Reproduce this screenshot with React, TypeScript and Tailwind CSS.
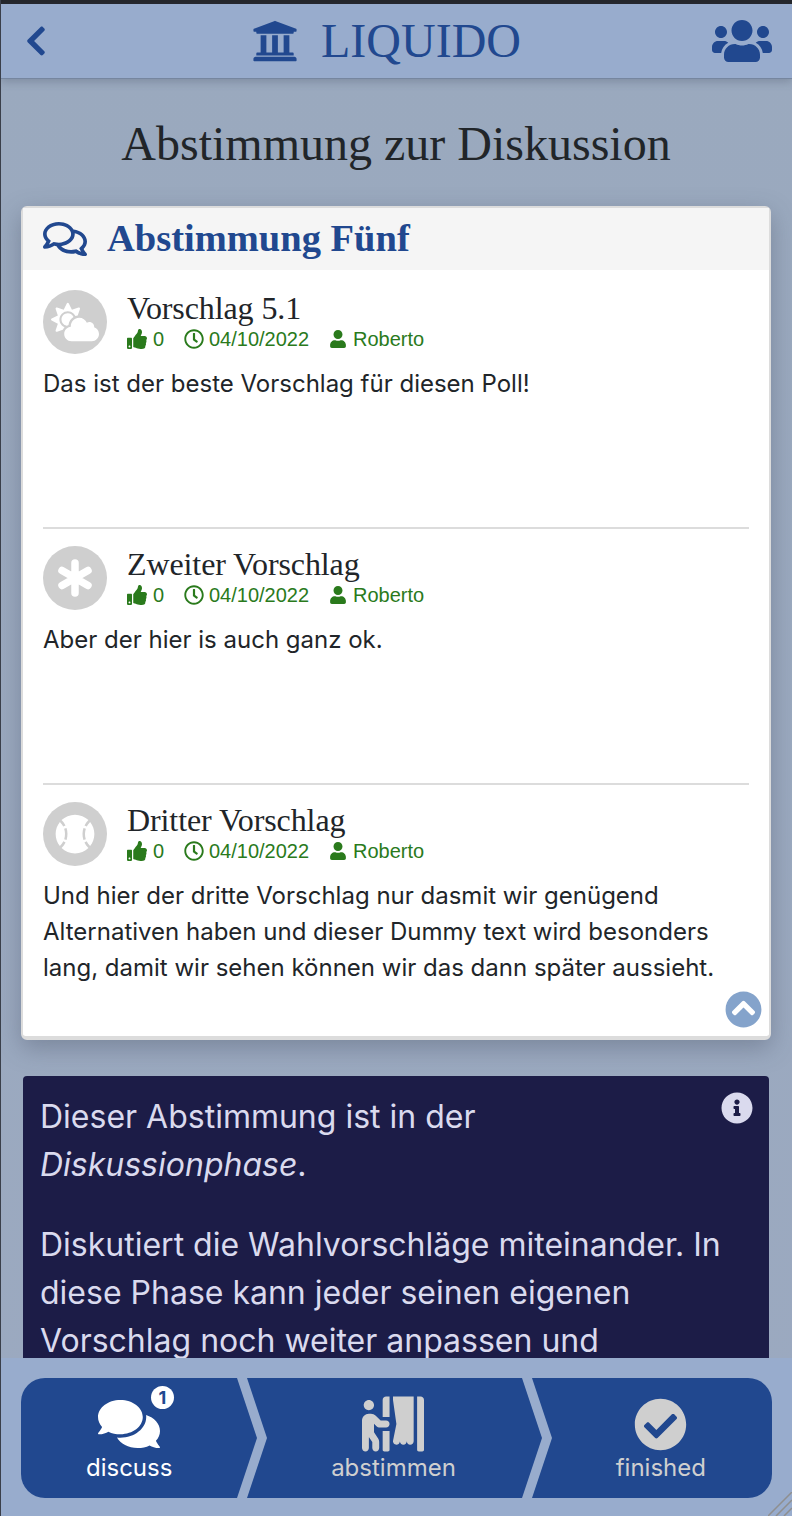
import React from 'react';
import {
  FaBaseballBall,
  FaCheckCircle,
  FaChevronCircleUp,
  FaChevronLeft,
  FaCloudSun,
  FaComments,
  FaInfoCircle,
  FaPersonBooth,
  FaRegClock,
  FaRegComments,
  FaThumbsUp,
  FaUniversity,
  FaUser,
  FaUsers,
} from 'react-icons/fa';

const serif = "font-['Liberation_Serif',serif]";

function Spokes() {
  return (
    <svg width="40" height="40" viewBox="0 0 40 40" stroke="currentColor" strokeWidth="7.5" strokeLinecap="round">
      <path d="M20 5V35M7 12.5L33 27.5M33 12.5L7 27.5" />
    </svg>
  );
}

function Proposal({ icon, title, text, border }: { icon: React.ReactNode; title: string; text: string; border?: boolean }) {
  return (
    <div className={`h-[239px] ${border ? 'border-b-2 border-[#dcdcdc]' : ''}`}>
      <div className="flex">
        <div className="w-16 h-16 rounded-full bg-[#cfcfcf] flex items-center justify-center text-white shrink-0">{icon}</div>
        <div className="ml-5">
          <div className={`${serif} text-[32px] leading-[36px] text-[#212529] tracking-[-0.1px]`}>{title}</div>
          <div className="flex items-center h-[20px] mt-[3px] text-[20px] text-[#2a7a1c] font-['Liberation_Sans',sans-serif]">
            <FaThumbsUp size={20} />
            <span className="ml-[6px] w-[31px]">0</span>
            <FaRegClock size={20} />
            <span className="ml-[5px] w-[120px]">04/10/2022</span>
            <FaUser size={18} />
            <span className="ml-[6px]">Roberto</span>
          </div>
        </div>
      </div>
      <p className="mt-[12px] text-[24px] leading-[36px] text-[#212529]">{text}</p>
    </div>
  );
}

function Step({ icon, label, active, badge }: { icon: React.ReactNode; label: string; active?: boolean; badge?: boolean }) {
  return (
    <div className={`relative flex flex-col items-center ${active ? 'text-white' : 'text-[#cfcfcf]'}`}>
      <div className="h-[54px] flex items-center">{icon}</div>
      {badge && (
        <span className="absolute left-[65px] top-[-11px] w-[23px] h-[23px] rounded-full bg-white text-[#21488f] text-[18px] font-bold leading-[23px] text-center">
          1
        </span>
      )}
      <span className="text-[24px] leading-[30px] mt-[2px]">{label}</span>
    </div>
  );
}

export default function App() {
  return (
    <div className="relative h-[1516px] w-[792px] overflow-hidden flex flex-col bg-gradient-to-b from-[#9aa9be] to-[#9ba9c0] font-['Inter',sans-serif] border-l border-[#3a3f4a]">
      <div className="h-1 shrink-0 bg-[#24262b]" />
      <header className="relative z-10 h-[75px] shrink-0 bg-[#98accd] border-b border-[#76869f] shadow-[0_3px_8px_rgba(70,80,100,0.3)] flex items-center justify-between pr-5 text-[#21488f]">
        <div className="w-[60px] pl-[18px]">
          <FaChevronLeft size={34} />
        </div>
        <div className="flex items-center">
          <FaUniversity size={46} />
          <span className={`${serif} text-[48px] leading-none ml-[23px]`}>LIQUIDO</span>
        </div>
        <FaUsers size={60} />
      </header>

      <main className="flex-1 min-h-0 overflow-hidden pl-[20px] pr-[21px]">
        <h1 className={`${serif} text-[48px] leading-[56px] text-[#212529] text-center mt-[37px]`}>
          Abstimmung zur Diskussion
        </h1>
        <section className="mt-[34px] h-[834px] bg-white rounded-[6px] border-2 border-[#dcdcdc] border-b-4 shadow-[0_8px_24px_rgba(60,70,90,0.35)] relative">
          <div className="h-[62px] bg-[#f5f5f5] flex items-center pl-5 text-[#21488f]">
            <FaRegComments size={44} />
            <span className={`${serif} text-[38.5px] font-bold ml-5`}>Abstimmung Fünf</span>
          </div>
          <div className="px-5 pt-5">
            <Proposal border icon={<FaCloudSun size={48} />} title="Vorschlag 5.1" text="Das ist der beste Vorschlag für diesen Poll!" />
            <div className="h-[17px]" />
            <Proposal border icon={<Spokes />} title="Zweiter Vorschlag" text="Aber der hier is auch ganz ok." />
            <div className="h-[17px]" />
            <Proposal icon={<FaBaseballBall size={40} />} title="Dritter Vorschlag" text="Und hier der dritte Vorschlag nur dasmit wir genügend Alternativen haben und dieser Dummy text wird besonders lang, damit wir sehen können wir das dann später aussieht." />
          </div>
          <FaChevronCircleUp size={37} className="absolute right-[7px] bottom-[8px] text-[#84a3cb]" />
        </section>

        <section className="relative mt-[36px] bg-[#1c1c47] rounded-[4px] mx-[2px] pl-[17px] pr-[17px] pt-[17px] pb-8 text-[32px] leading-[48px] text-[#dadaee]">
          <FaInfoCircle size={32} className="absolute right-4 top-[16px]" />
          <p className="pr-20">
            Dieser Abstimmung ist in der <em>Diskussionphase</em>.
          </p>
          <p className="mt-[32px]">
            Diskutiert die Wahlvorschläge miteinander. In diese Phase kann jeder seinen eigenen Vorschlag noch weiter anpassen und verbessern.
          </p>
        </section>
      </main>

      <footer className="relative z-10 h-[158px] shrink-0 bg-[#98accd] pt-5 pl-5 pr-[20px]">
        <div className="h-[120px] bg-[#21488f] rounded-[24px] grid grid-cols-3 relative overflow-hidden">
          <div className="flex justify-center pt-[19px] pr-[34px]">
            <Step active badge icon={<FaComments size={62} />} label="discuss" />
          </div>
          <div className="flex justify-center pt-[19px] pr-[6px]">
            <Step icon={<FaPersonBooth size={62} />} label="abstimmen" />
          </div>
          <div className="flex justify-center pt-[19px] pl-[28px]">
            <Step icon={<FaCheckCircle size={53} />} label="finished" />
          </div>
          <svg className="absolute left-[216px] top-0" width="32" height="120" viewBox="0 0 32 120" fill="none">
            <path d="M0 0H10L30 60L10 120H0L20 60Z" fill="#98accd" />
          </svg>
          <svg className="absolute left-[501px] top-0" width="32" height="120" viewBox="0 0 32 120" fill="none">
            <path d="M0 0H10L30 60L10 120H0L20 60Z" fill="#98accd" />
          </svg>
        </div>
        <svg className="absolute right-0 bottom-0" width="24" height="24" viewBox="0 0 24 24" stroke="#8f8f8f" strokeWidth="1.5">
          <path d="M0 24L24 0M8 24L24 8M16 24L24 16" />
        </svg>
      </footer>
    </div>
  );
}
